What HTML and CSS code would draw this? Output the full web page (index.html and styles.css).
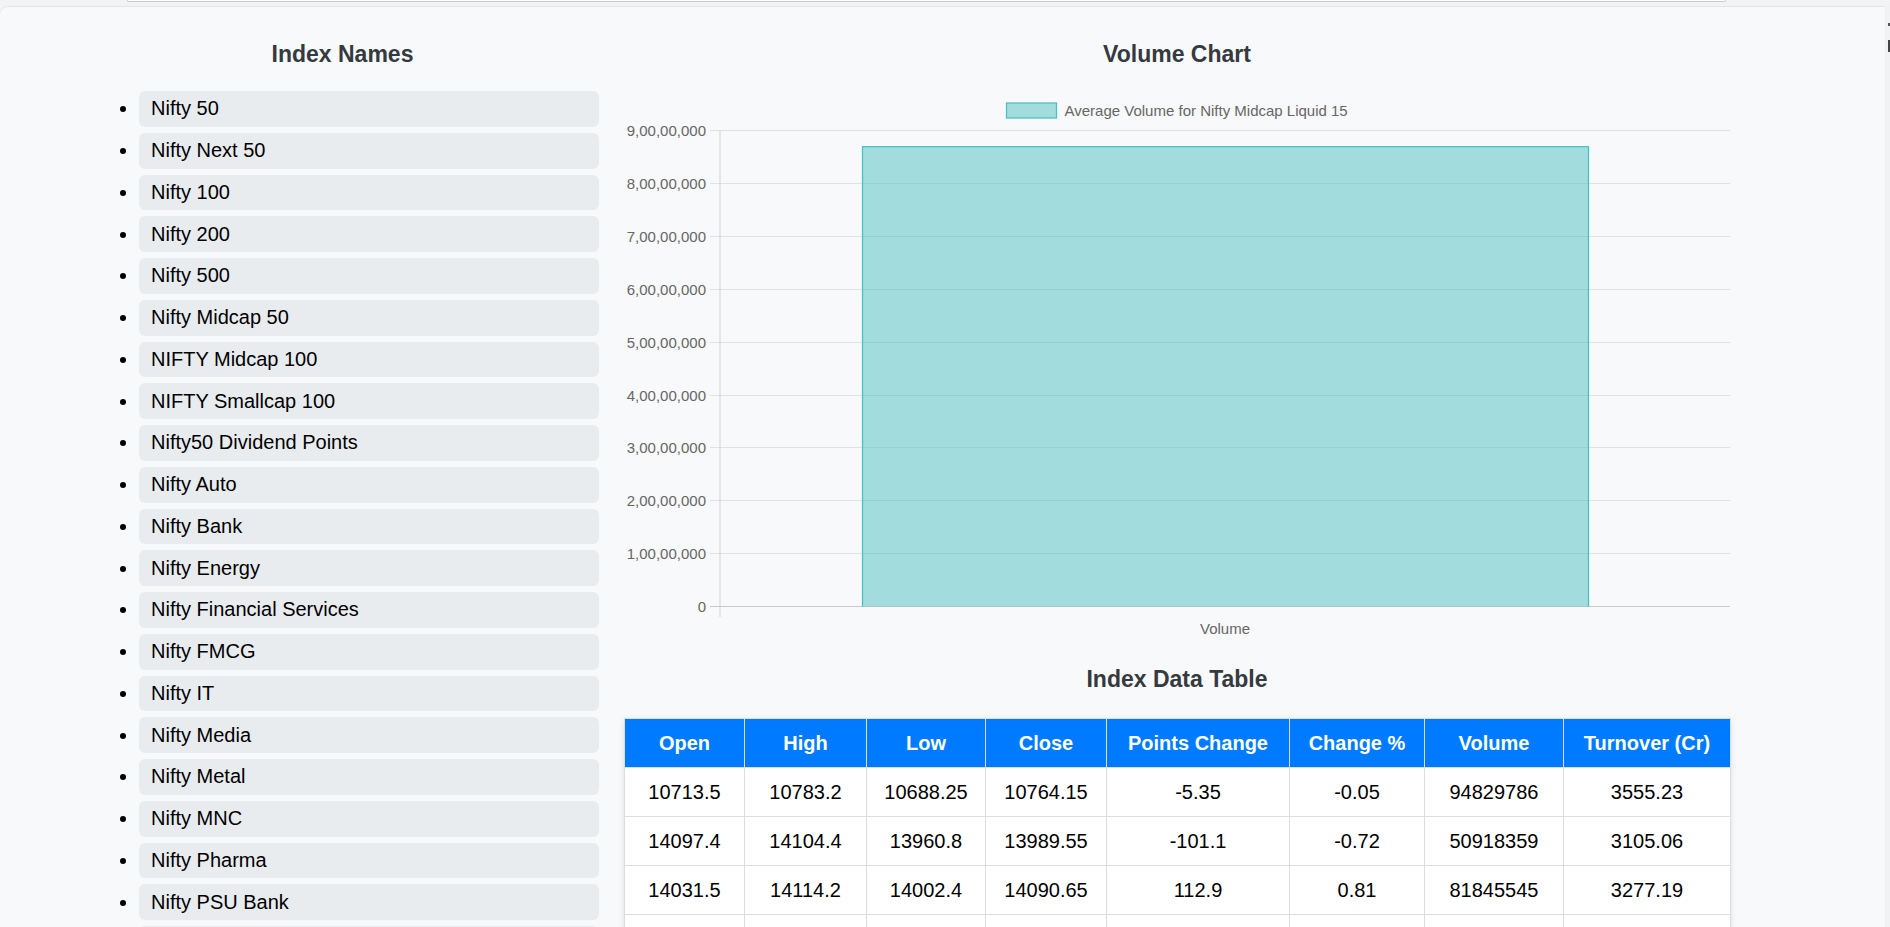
FILE: index.html
```html
<!DOCTYPE html>
<html lang="en">
<head>
<meta charset="utf-8">
<title>Nifty Indices Dashboard</title>
<link rel="stylesheet" href="styles.css">
</head>
<body>
<div class="topbar"><div class="search"></div></div>
<main class="main">
  <section class="names">
    <h2 class="title">Index Names</h2>
    <ul class="index-list">
      <li>Nifty 50</li>
      <li>Nifty Next 50</li>
      <li>Nifty 100</li>
      <li>Nifty 200</li>
      <li>Nifty 500</li>
      <li>Nifty Midcap 50</li>
      <li>NIFTY Midcap 100</li>
      <li>NIFTY Smallcap 100</li>
      <li>Nifty50 Dividend Points</li>
      <li>Nifty Auto</li>
      <li>Nifty Bank</li>
      <li>Nifty Energy</li>
      <li>Nifty Financial Services</li>
      <li>Nifty FMCG</li>
      <li>Nifty IT</li>
      <li>Nifty Media</li>
      <li>Nifty Metal</li>
      <li>Nifty MNC</li>
      <li>Nifty Pharma</li>
      <li>Nifty PSU Bank</li>
      <li>Nifty Realty</li>
      <li>Nifty Midcap Liquid 15</li>
    </ul>
  </section>
  <section class="content">
    <h2 class="title">Volume Chart</h2>
    <svg class="chart" viewBox="0 0 1106 560" width="1106" height="560">
      <g class="grid">
        <line x1="86" y1="50.5" x2="1106" y2="50.5"/>
        <line x1="86" y1="103.5" x2="1106" y2="103.5"/>
        <line x1="86" y1="156.5" x2="1106" y2="156.5"/>
        <line x1="86" y1="209.5" x2="1106" y2="209.5"/>
        <line x1="86" y1="262.5" x2="1106" y2="262.5"/>
        <line x1="86" y1="315.5" x2="1106" y2="315.5"/>
        <line x1="86" y1="367.5" x2="1106" y2="367.5"/>
        <line x1="86" y1="420.5" x2="1106" y2="420.5"/>
        <line x1="86" y1="473.5" x2="1106" y2="473.5"/>
      </g>
      <line class="axis" x1="96" y1="50" x2="96" y2="537"/>
      <line class="zero" x1="86" y1="526.5" x2="1106" y2="526.5"/>
      <path class="bar" d="M238.5 526.5 V66.5 H964.5 V526.5"/>
      <rect class="legend-box" x="382.5" y="23" width="50" height="15"/>
      <text class="label" x="440.5" y="35.5">Average Volume for Nifty Midcap Liquid 15</text>
      <g class="ylabels">
        <text x="82" y="55.5">9,00,00,000</text>
        <text x="82" y="108.5">8,00,00,000</text>
        <text x="82" y="161.5">7,00,00,000</text>
        <text x="82" y="214.5">6,00,00,000</text>
        <text x="82" y="267.5">5,00,00,000</text>
        <text x="82" y="320.5">4,00,00,000</text>
        <text x="82" y="372.5">3,00,00,000</text>
        <text x="82" y="425.5">2,00,00,000</text>
        <text x="82" y="478.5">1,00,00,000</text>
        <text x="82" y="531.5">0</text>
      </g>
      <text class="label xlabel" x="601" y="554">Volume</text>
    </svg>
    <h2 class="title table-title">Index Data Table</h2>
    <table class="data-table">
      <colgroup>
        <col class="c1"><col class="c2"><col class="c3"><col class="c4">
        <col class="c5"><col class="c6"><col class="c7"><col class="c8">
      </colgroup>
      <thead>
        <tr><th>Open</th><th>High</th><th>Low</th><th>Close</th><th>Points Change</th><th>Change %</th><th>Volume</th><th>Turnover (Cr)</th></tr>
      </thead>
      <tbody>
        <tr><td>10713.5</td><td>10783.2</td><td>10688.25</td><td>10764.15</td><td>-5.35</td><td>-0.05</td><td>94829786</td><td>3555.23</td></tr>
        <tr><td>14097.4</td><td>14104.4</td><td>13960.8</td><td>13989.55</td><td>-101.1</td><td>-0.72</td><td>50918359</td><td>3105.06</td></tr>
        <tr><td>14031.5</td><td>14114.2</td><td>14002.4</td><td>14090.65</td><td>112.9</td><td>0.81</td><td>81845545</td><td>3277.19</td></tr>
        <tr><td>14120.3</td><td>14185.6</td><td>14050.1</td><td>14160.2</td><td>70.1</td><td>0.5</td><td>64210577</td><td>3012.44</td></tr>
      </tbody>
    </table>
  </section>
</main>
<div class="edge"><span class="dot"></span><span class="bar-mark"></span></div>
</body>
</html>
```
FILE: styles.css
```css
* { box-sizing: border-box; }
html, body { margin: 0; }
body {
  background: #f2f3f5;
  font-family: "Liberation Sans", Arial, sans-serif;
  position: relative;
}
.topbar { height: 6px; padding-left: 127px; }
.search {
  width: 1599px;
  height: 2px;
  background: #fff;
  border: 1px solid #cbcbcb;
  border-top: 0;
  border-radius: 0 0 5px 5px;
}
.main {
  width: 1885px;
  min-height: 921px;
  background: #f8f9fa;
  border-top: 1px solid #e3e5e8;
  border-top-left-radius: 8px;
  display: flex;
  gap: 25px;
  padding: 34px 0 0 86px;
}
.names { width: 513px; flex: none; }
.title {
  margin: 0;
  font-size: 23px;
  line-height: 26px;
  font-weight: bold;
  color: #343a40;
  text-align: center;
}
.index-list { margin: 24px 0 0; padding-left: 53px; }
.index-list li {
  font-size: 20px;
  line-height: 23px;
  padding: 6.375px 12px;
  margin-bottom: 6px;
  background: #e9ecef;
  border-radius: 6px;
  color: #000;
}
.content { width: 1106px; flex: none; }
.chart { display: block; margin-top: 13px; width: 1106px; height: 560px; }
.grid line { stroke: #e0e1e2; stroke-width: 1; }
.axis { stroke: #d2d3d4; stroke-width: 1; }
.zero { stroke: #c9cacb; stroke-width: 1; }
.bar { fill: rgba(75, 192, 192, 0.5); stroke: #4bc0c0; stroke-width: 1.25; }
.legend-box { fill: rgba(75, 192, 192, 0.5); stroke: #4bc0c0; stroke-width: 1.25; }
.chart text { font-family: "Liberation Sans", Arial, sans-serif; font-size: 15px; fill: #666; }
.ylabels text { text-anchor: end; }
.xlabel { text-anchor: middle; }
.table-title { margin-top: 26px; }
.data-table {
  margin-top: 26px;
  width: 1106px;
  border-collapse: collapse;
  table-layout: fixed;
  background: #fff;
  box-shadow: 0 2px 6px rgba(0, 0, 0, 0.1);
  font-size: 20px;
}
.c1 { width: 120px; } .c2 { width: 122px; } .c3 { width: 119px; } .c4 { width: 121px; }
.c5 { width: 183px; } .c6 { width: 135px; } .c7 { width: 139px; } .c8 { width: 167px; }
.data-table th, .data-table td {
  border: 1px solid #ddd;
  padding: 12.5px 4px;
  line-height: 23px;
  text-align: center;
  color: #000;
}
.data-table th { background: #007bff; color: #fff; font-weight: bold; }
.edge {
  position: absolute;
  top: 6px;
  left: 1885px;
  width: 5px;
  height: 921px;
  background: #f1f2f4;
}
.dot { position: absolute; left: 3px; top: 17px; width: 2px; height: 3px; background: #555; }
.bar-mark { position: absolute; left: 3px; top: 34px; width: 2px; height: 12px; background: #444; }
```
